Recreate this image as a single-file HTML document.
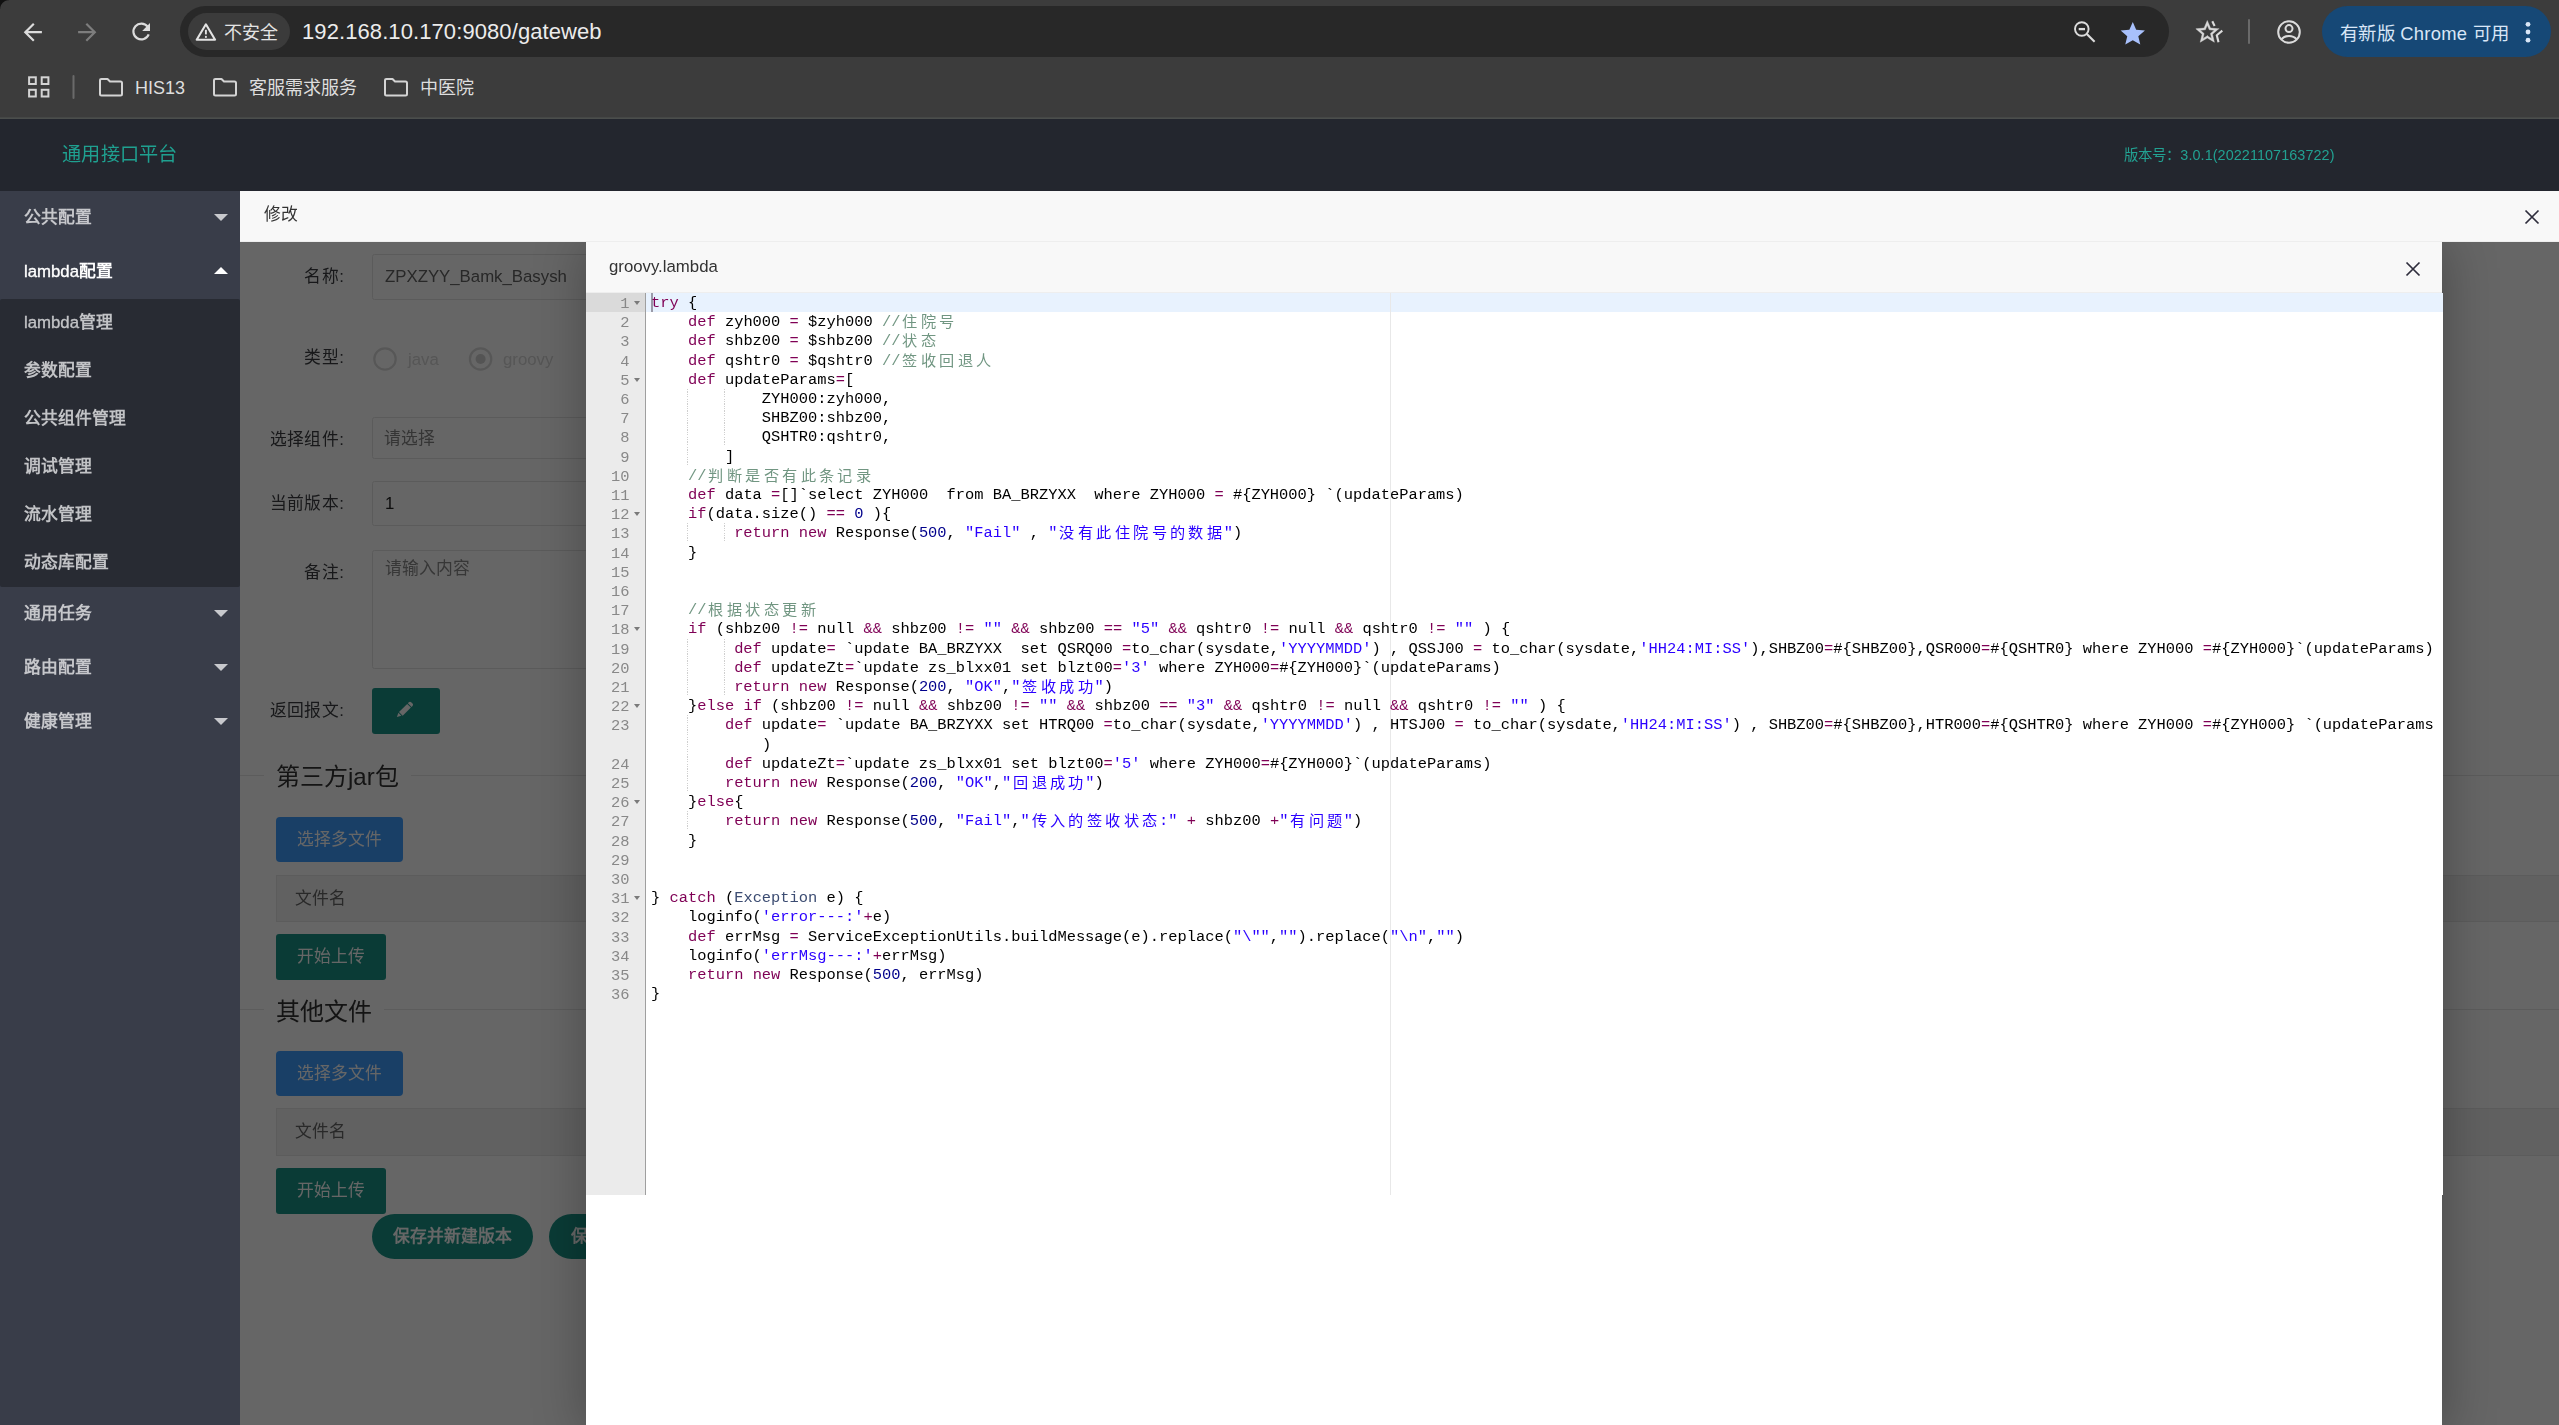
<!DOCTYPE html>
<html lang="zh-CN">
<head>
<meta charset="utf-8">
<title>gateweb</title>
<style>
:root{--cw:9.2367px;--lh:19.2px;--fs:15.4px;}
*{box-sizing:border-box;margin:0;padding:0}
div,span{will-change:transform}
#chrome,#chrome div,#chrome span{will-change:auto}
html,body{width:2559px;height:1425px;overflow:hidden;background:#fff}
body{position:relative;-webkit-font-smoothing:antialiased;font-family:"Liberation Sans",sans-serif;font-size:16.8px;color:#333}
.abs{position:absolute}
s{text-decoration:none}
/* ---------- browser chrome ---------- */
#chrome{position:absolute;left:0;top:0;width:2559px;height:119px;background:#3c3c3c}
#chrome .line{position:absolute;left:0;top:117px;width:2559px;height:2px;background:linear-gradient(#454746 0,#454746 50%,#4b4e4c 50%,#4b4e4c 100%)}
#pill{position:absolute;left:180px;top:6px;width:1989px;height:51px;border-radius:26px;background:#282828}
#chip{position:absolute;left:188px;top:13px;width:102px;height:37px;border-radius:19px;background:#3b3b3b}
#chip span{position:absolute;left:35.500px;top:.8px;line-height:38px;font-size:18px;color:#e3e3e3;white-space:nowrap}
#url{position:absolute;left:302px;top:6px;line-height:51px;font-size:22px;color:#ececec;white-space:nowrap;letter-spacing:.09px}
.bm{position:absolute;top:75.300px;line-height:26px;font-size:18px;color:#dedede;white-space:nowrap}
#upd{position:absolute;left:2322px;top:6px;width:229px;height:51px;border-radius:26px;background:#164876}
#upd span{position:absolute;left:18px;top:1.5px;line-height:51px;font-size:18.4px;color:#d9e6f7;white-space:nowrap;letter-spacing:.28px}
/* ---------- app header ---------- */
#hdr{position:absolute;left:0;top:119px;width:2559px;height:72px;background:#23262e;z-index:2}
#hdr .t{position:absolute;left:62.300px;top:-.3px;line-height:72px;font-size:19.2px;color:#1fa090;white-space:nowrap;letter-spacing:.28px}
#hdr .v{position:absolute;left:2124px;top:0;line-height:72px;font-size:14.4px;color:#22a192;white-space:nowrap;letter-spacing:.08px}
/* ---------- sidebar ---------- */
#side{position:absolute;left:0;top:190px;width:240px;height:1235px;background:#393d49}
#side .it{position:absolute;left:0;width:240px;height:54px;line-height:56.400px;padding-left:24px;font-size:16.8px;font-weight:bold;color:#c6c7cb;white-space:nowrap}
#side .sub{position:absolute;left:0;top:109px;width:240px;height:287.500px;background:#282b33;border-radius:2px}
#side .si{position:absolute;left:0;width:240px;height:48px;line-height:50.400px;margin-top:-1px;padding-left:24px;font-size:16.8px;font-weight:bold;color:#c2c3c6;white-space:nowrap}
#side .ar{position:absolute;left:214px;width:0;height:0;border-left:7px solid transparent;border-right:7px solid transparent}
#side .dn{border-top:7px solid #c8c9cd}
#side .up{border-bottom:7px solid #fff}
#side u{text-decoration:none;font-weight:normal;-webkit-text-stroke:.35px currentColor}
/* ---------- outer dialog ---------- */
#main{position:absolute;left:240px;top:190px;width:2319px;height:1235px;background:#fff;overflow:hidden}
.tb{position:absolute;left:0;top:0;height:52px;background:#f8f8f8;border-bottom:1px solid #eee;line-height:50px;font-size:16.8px;color:#333;white-space:nowrap}
.lb{position:absolute;left:0;width:104.3px;text-align:right;font-size:16.8px;color:#3c3e42;line-height:24px;white-space:nowrap;letter-spacing:.4px}
.in{position:absolute;left:132px;width:1400px;border:1px solid #e4e4e4;border-radius:2.400px;background:#fff;font-size:16.8px;color:#646464;padding-left:12px;white-space:nowrap}
.btn{position:absolute;color:#fff;font-size:16.8px;text-align:center;white-space:nowrap}
.fs{position:absolute;left:0;width:2319px;height:1px;background:#e6e6e6}
.lg{position:absolute;left:25px;background:#fff;padding:0 12px;font-size:24px;line-height:36px;color:#333;white-space:nowrap}
.th{position:absolute;left:36px;width:2400px;height:47px;background:#f2f2f2;border:1px solid #e6e6e6;line-height:45px;padding-left:18px;color:#666;font-size:16.8px}
#shade{position:absolute;left:0;top:52px;width:2319px;height:1183px;background:rgba(0,0,0,.6)}
/* ---------- inner dialog ---------- */
#clip{position:absolute;left:240px;top:242px;width:2319px;height:1183px;overflow:hidden}
#dlg{position:absolute;left:346px;top:0;width:1856px;height:1190px;background:#fff;box-shadow:1px 1px 50px rgba(0,0,0,.3)}
#ed{position:absolute;left:0;top:50.5px;width:1857px;height:902.4px;background:#fff;overflow:hidden;font-family:"Liberation Mono",monospace;font-size:var(--fs);line-height:var(--lh)}
#ed .gut{position:absolute;left:0;top:0;width:60px;height:100%;background:#ebebeb;border-right:1px solid #9f9f9f}
#ed .g{position:absolute;left:0;width:59px;height:var(--lh);line-height:calc(var(--lh) + 2.8px);text-align:right;padding-right:15.6px;color:#888;white-space:nowrap}
#ed .ga{background:#dadada}
#ed .g b{position:absolute;left:47.5px;top:8px;width:0;height:0;border-left:3.6px solid transparent;border-right:3.6px solid transparent;border-top:4.6px solid #7a7a7a}
#ed .al{position:absolute;left:60px;top:0;width:1800px;height:var(--lh);background:#e8f2fe}
#ed .pm{position:absolute;left:803.7px;top:0;width:1px;height:100%;background:#e8e8e8}
#ed .cur{position:absolute;left:64.8px;top:0;width:2px;height:var(--lh);background:#9a9aa8}
#ed .txt{position:absolute;left:64.8px;top:0;width:1800px;height:100%;color:#000;will-change:transform}
#ed .l{position:absolute;left:0;height:var(--lh);line-height:calc(var(--lh) + 2.6px);white-space:pre}
#ed .l i{display:inline-block;width:calc(var(--cw)*2);text-align:center;font-style:normal;font-size:15.200px;line-height:1;vertical-align:baseline;position:relative;top:1px}
#ed .ig{position:absolute;width:1px;background:repeating-linear-gradient(to bottom,#cfcfcf 0,#cfcfcf 1.2px,transparent 1.2px,transparent 2.4px)}
.k{color:#7f0055}.s{color:#2a00ff}.c{color:#719682}.n{color:#00008b}.f{color:#3c4c72}
</style>
</head>
<body>
<!-- browser chrome -->
<div id="chrome">
  <div class="abs" style="left:0;top:0;width:9px;height:9px;background:radial-gradient(circle at 100% 100%,transparent 8.300px,#111 9.300px)"></div>
  <div id="pill"></div>
  <div id="chip"><span>不安全</span></div>
  <div id="url">192.168.10.170:9080/gateweb</div>
  <svg class="abs" style="left:0;top:0" width="2559" height="118" viewBox="0 0 2559 118" fill="none" stroke-linecap="round" stroke-linejoin="round">
    <!-- back -->
    <path d="M41.900 32.200H25.600M33.800 23.700l-8.500 8.500 8.500 8.500" stroke="#dcdcdc" stroke-width="2.2" stroke-linecap="butt" stroke-linejoin="miter"/>
    <!-- forward -->
    <path d="M78.100 32.200h16.300M86.300 23.700l8.500 8.500-8.500 8.500" stroke="#7d7d7d" stroke-width="2.2" stroke-linecap="butt" stroke-linejoin="miter"/>
    <!-- reload -->
    <path d="M147.600 26.700A7.900 7.900 0 1 0 148.700 34.300" stroke="#dcdcdc" stroke-width="2.200" stroke-linecap="butt"/>
    <path d="M150 23.100v7.800h-7.800z" fill="#dcdcdc" stroke="none"/>
    <!-- warning -->
    <path d="M205.900 24.300l9.200 15.400h-18.400z" stroke="#e3e3e3" stroke-width="2.100" stroke-linejoin="round"/>
    <path d="M205.900 29.800v4.600" stroke="#e3e3e3" stroke-width="1.900" stroke-linecap="butt"/>
    <circle cx="205.900" cy="36.900" r="1.050" fill="#e3e3e3" stroke="none"/>
    <!-- zoom out -->
    <circle cx="2081.800" cy="29" r="6.800" stroke="#dcdcdc" stroke-width="1.900"/>
    <path d="M2086.800 34l7.800 7.800" stroke="#dcdcdc" stroke-width="2.100" stroke-linecap="butt"/>
    <path d="M2078.700 29.100h6.300" stroke="#dcdcdc" stroke-width="2.300" stroke-linecap="butt"/>
    <!-- star filled -->
    <path transform="translate(2118.200 19.600) scale(1.215 1.190)" d="M12 17.27L18.18 21l-1.64-7.03L22 9.24l-7.19-.61L12 2 9.19 8.63 2 9.24l5.46 4.73L5.82 21z" fill="#a8c0fb" stroke="none"/>
    <!-- star with second star -->
    <path transform="translate(2193.560 18.200) scale(1.145)" d="M22 9.24l-7.19-.62L12 2 9.19 8.63 2 9.24l5.46 4.73L5.82 21 12 17.270 18.18 21l-1.63-7.03L22 9.24zM12 15.400l-3.76 2.27 1-4.28-3.32-2.88 4.38-.38L12 6.100l1.71 4.04 4.38.38-3.32 2.88 1 4.28L12 15.400z" fill="#d8d8d8" fill-rule="evenodd" stroke="#d8d8d8" stroke-width=".35" stroke-linejoin="miter"/>
    <path d="M2212.300 21.300l2.300 4.700" stroke="#dcdcdc" stroke-width="2.100" stroke-linecap="butt" fill="none"/>
    <path d="M2222.300 30.600l-5.500 4.700 1.700 7" stroke="#dcdcdc" stroke-width="2.100" stroke-linecap="butt" stroke-linejoin="miter" fill="none"/>
    <!-- divider -->
    <path d="M2249 20v23" stroke="#6a6a6a" stroke-width="2" />
    <!-- profile -->
    <circle cx="2289" cy="32" r="10.800" stroke="#dcdcdc" stroke-width="2"/>
    <circle cx="2289" cy="28.600" r="3.500" stroke="#dcdcdc" stroke-width="2"/>
    <path d="M2281.300 39.300c2-2.300 4.700-3.300 7.700-3.300s5.700 1 7.700 3.300" stroke="#dcdcdc" stroke-width="2" stroke-linecap="butt"/>
    <!-- apps grid -->
    <g stroke="#d4d4d4" stroke-width="2" stroke-linejoin="miter">
      <rect x="29.100" y="77.300" width="6.700" height="6.700"/><rect x="41.700" y="77.300" width="6.700" height="6.700"/>
      <rect x="29.100" y="89.800" width="6.700" height="6.700"/><rect x="41.700" y="89.800" width="6.700" height="6.700"/>
    </g>
    <path d="M73.500 76v22" stroke="#6a6a6a" stroke-width="2"/>
    <!-- folders -->
    <g stroke="#d4d4d4" stroke-width="2" stroke-linejoin="round">
      <path d="M100 80.500a1.500 1.500 0 0 1 1.500-1.500h6l2.500 2.500h10.500a1.500 1.500 0 0 1 1.500 1.500v11a1.500 1.500 0 0 1-1.500 1.500h-19a1.500 1.500 0 0 1-1.500-1.500z"/>
      <path transform="translate(114 0)" d="M100 80.500a1.500 1.500 0 0 1 1.500-1.500h6l2.500 2.500h10.500a1.500 1.500 0 0 1 1.500 1.500v11a1.500 1.500 0 0 1-1.500 1.500h-19a1.500 1.500 0 0 1-1.500-1.500z"/>
      <path transform="translate(285 0)" d="M100 80.500a1.500 1.500 0 0 1 1.500-1.500h6l2.500 2.500h10.500a1.500 1.500 0 0 1 1.500 1.500v11a1.500 1.500 0 0 1-1.500 1.500h-19a1.500 1.500 0 0 1-1.500-1.500z"/>
    </g>
  </svg>
  <div class="bm" style="left:135px">HIS13</div>
  <div class="bm" style="left:249px">客服需求服务</div>
  <div class="bm" style="left:420px">中医院</div>
  <div id="upd"><span>有新版 Chrome 可用</span></div>
  <svg class="abs" style="left:2520px;top:18px" width="16" height="30" viewBox="0 0 16 30"><circle cx="8" cy="6.300" r="2.400" fill="#d9e6f7"/><circle cx="8" cy="14" r="2.400" fill="#d9e6f7"/><circle cx="8" cy="22.200" r="2.400" fill="#d9e6f7"/></svg>
  <div class="line"></div>
</div>

<!-- app header -->
<div id="hdr"><div class="t">通用接口平台</div><div class="v">版本号：3.0.1(20221107163722)</div></div>

<!-- sidebar -->
<div id="side">
  <div class="it" style="top:0">公共配置</div><div class="ar dn" style="top:24px"></div>
  <div class="it" style="top:54px;color:#fff"><u>lambda</u>配置</div><div class="ar up" style="top:77px"></div>
  <div class="sub">
    <div class="si" style="top:0"><u>lambda</u>管理</div>
    <div class="si" style="top:48px">参数配置</div>
    <div class="si" style="top:96px">公共组件管理</div>
    <div class="si" style="top:144px">调试管理</div>
    <div class="si" style="top:192px">流水管理</div>
    <div class="si" style="top:240px">动态库配置</div>
  </div>
  <div class="it" style="top:396px">通用任务</div><div class="ar dn" style="top:420px"></div>
  <div class="it" style="top:450px">路由配置</div><div class="ar dn" style="top:474px"></div>
  <div class="it" style="top:504px">健康管理</div><div class="ar dn" style="top:528px"></div>
</div>

<!-- outer dialog (修改) -->
<div id="main">
  <div class="tb" style="width:2319px;padding-left:24px">修改</div>
  <svg class="abs" style="left:2284.300px;top:18.700px" width="16" height="16" viewBox="0 0 16 16"><path d="M1.500 1.500l13 13M14.500 1.500l-13 13" stroke="#2e2d3c" stroke-width="1.700"/></svg>

  <!-- form -->
  <div class="lb" style="top:75px">名称:</div>
  <div class="in" style="top:64px;height:46px;line-height:44px">ZPXZYY_Bamk_Basysh</div>
  <div class="lb" style="top:156px">类型:</div>
  <svg class="abs" style="left:130px;top:154px" width="330" height="30" viewBox="0 0 330 30" fill="none">
    <circle cx="15" cy="15" r="10.700" stroke="#dadada" stroke-width="2.200" fill="none"/>
    <circle cx="110.600" cy="15" r="10.700" stroke="#dadada" stroke-width="2.200" fill="none"/>
    <circle cx="110.600" cy="15" r="5" fill="#d2d2d2"/>
  </svg>
  <div class="abs" style="left:167.500px;top:158px;line-height:24px;font-size:16.8px;color:#d6d6d6">java</div>
  <div class="abs" style="left:263px;top:158px;line-height:24px;font-size:16.8px;color:#d6d6d6">groovy</div>
  <div class="lb" style="top:238px">选择组件:</div>
  <div class="in" style="top:227px;height:42px;line-height:41px;color:#848484;padding-left:10.500px;letter-spacing:.35px">请选择</div>
  <div class="lb" style="top:302px">当前版本:</div>
  <div class="in" style="top:291px;height:45px;line-height:43px;color:#222">1</div>
  <div class="lb" style="top:371px">备注:</div>
  <div class="in" style="top:360px;height:119px;line-height:36px;color:#8a8a8a;padding-left:12px">请输入内容</div>
  <div class="lb" style="top:509px">返回报文:</div>
  <div class="btn" style="left:132px;top:498px;width:68px;height:46px;background:#1a9588;border-radius:3px">
    <svg class="abs" style="left:22px;top:11px" width="24" height="24" viewBox="0 0 24 24"><path d="M2.900 18.100l1.500-4.300 2.900 2.900z" fill="#fff"/><path d="M5 13.100l8.200-8.200 3.700 3.700-8.200 8.200z" fill="#fff"/><path d="M13.900 4.200l.9-.9c.7-.7 1.700-.7 2.400 0l1.300 1.300c.7.7 .7 1.700 0 2.400l-.9 .9z" fill="#fff"/></svg>
  </div>

  <div class="fs" style="top:585px"></div><div class="lg" style="top:569px;left:24px">第三方jar包</div>
  <div class="btn" style="left:36px;top:627px;width:127px;height:45px;line-height:45px;background:#409eff;border-radius:4px">选择多文件</div>
  <div class="th" style="top:685px">文件名</div>
  <div class="btn" style="left:36px;top:744px;width:110px;height:46px;line-height:46px;background:#1a9588;border-radius:3px">开始上传</div>

  <div class="fs" style="top:819px"></div><div class="lg" style="top:804px;left:24px">其他文件</div>
  <div class="btn" style="left:36px;top:861px;width:127px;height:45px;line-height:45px;background:#409eff;border-radius:4px">选择多文件</div>
  <div class="th" style="top:918px;height:48px">文件名</div>
  <div class="btn" style="left:36px;top:978px;width:110px;height:46px;line-height:46px;background:#1a9588;border-radius:3px">开始上传</div>

  <div class="btn" style="left:132px;top:1024px;width:161px;height:45px;line-height:45px;background:#1a9588;border-radius:23px;font-weight:bold">保存并新建版本</div>
  <div class="btn" style="left:309px;top:1024px;width:100px;height:45px;line-height:45px;background:#1a9588;border-radius:23px;font-weight:bold;text-align:left;padding-left:22px">保存</div>

  <div id="shade"></div>
</div>

<!-- inner dialog (groovy.lambda) -->
<div id="clip"><div id="dlg">
  <div class="tb" style="width:1856px;height:50.5px;padding-left:23px;line-height:49px">groovy.lambda</div>
  <svg class="abs" style="left:1819.200px;top:18.600px" width="16" height="16" viewBox="0 0 16 16"><path d="M1.500 1.500l13 13M14.500 1.500l-13 13" stroke="#2e2d3c" stroke-width="1.700"/></svg>
  <div id="ed">
    <div class="gut"></div>
    <div class="al"></div>
    <div class="pm"></div>
    <div class="cur"></div>
<div class="g ga" style="top:0.00px">1<b></b></div>
<div class="g" style="top:19.20px">2</div>
<div class="g" style="top:38.40px">3</div>
<div class="g" style="top:57.60px">4</div>
<div class="g" style="top:76.80px">5<b></b></div>
<div class="g" style="top:96.00px">6</div>
<div class="g" style="top:115.20px">7</div>
<div class="g" style="top:134.40px">8</div>
<div class="g" style="top:153.60px">9</div>
<div class="g" style="top:172.80px">10</div>
<div class="g" style="top:192.00px">11</div>
<div class="g" style="top:211.20px">12<b></b></div>
<div class="g" style="top:230.40px">13</div>
<div class="g" style="top:249.60px">14</div>
<div class="g" style="top:268.80px">15</div>
<div class="g" style="top:288.00px">16</div>
<div class="g" style="top:307.20px">17</div>
<div class="g" style="top:326.40px">18<b></b></div>
<div class="g" style="top:345.60px">19</div>
<div class="g" style="top:364.80px">20</div>
<div class="g" style="top:384.00px">21</div>
<div class="g" style="top:403.20px">22<b></b></div>
<div class="g" style="top:422.40px">23</div>
<div class="g" style="top:460.80px">24</div>
<div class="g" style="top:480.00px">25</div>
<div class="g" style="top:499.20px">26<b></b></div>
<div class="g" style="top:518.40px">27</div>
<div class="g" style="top:537.60px">28</div>
<div class="g" style="top:556.80px">29</div>
<div class="g" style="top:576.00px">30</div>
<div class="g" style="top:595.20px">31<b></b></div>
<div class="g" style="top:614.40px">32</div>
<div class="g" style="top:633.60px">33</div>
<div class="g" style="top:652.80px">34</div>
<div class="g" style="top:672.00px">35</div>
<div class="g" style="top:691.20px">36</div>
<div class=txt>
<div class=ig style="top:96.00px;left:35.95px;height:19.20px"></div>
<div class=ig style="top:96.00px;left:72.89px;height:19.20px"></div>
<div class=ig style="top:115.20px;left:35.95px;height:19.20px"></div>
<div class=ig style="top:115.20px;left:72.89px;height:19.20px"></div>
<div class=ig style="top:134.40px;left:35.95px;height:19.20px"></div>
<div class=ig style="top:134.40px;left:72.89px;height:19.20px"></div>
<div class=ig style="top:153.60px;left:35.95px;height:19.20px"></div>
<div class=ig style="top:230.40px;left:35.95px;height:19.20px"></div>
<div class=ig style="top:230.40px;left:72.89px;height:19.20px"></div>
<div class=ig style="top:345.60px;left:35.95px;height:19.20px"></div>
<div class=ig style="top:345.60px;left:72.89px;height:19.20px"></div>
<div class=ig style="top:364.80px;left:35.95px;height:19.20px"></div>
<div class=ig style="top:364.80px;left:72.89px;height:19.20px"></div>
<div class=ig style="top:384.00px;left:35.95px;height:19.20px"></div>
<div class=ig style="top:384.00px;left:72.89px;height:19.20px"></div>
<div class=ig style="top:422.40px;left:35.95px;height:38.40px"></div>
<div class=ig style="top:460.80px;left:35.95px;height:19.20px"></div>
<div class=ig style="top:480.00px;left:35.95px;height:19.20px"></div>
<div class=ig style="top:518.40px;left:35.95px;height:19.20px"></div>
<div class=l style="top:0.00px"><s class=k>try</s> {</div>
<div class=l style="top:19.20px">    <s class=k>def</s> zyh000 <s class=k>=</s> $zyh000 <s class=c>//<i>住</i><i>院</i><i>号</i></s></div>
<div class=l style="top:38.40px">    <s class=k>def</s> shbz00 <s class=k>=</s> $shbz00 <s class=c>//<i>状</i><i>态</i></s></div>
<div class=l style="top:57.60px">    <s class=k>def</s> qshtr0 <s class=k>=</s> $qshtr0 <s class=c>//<i>签</i><i>收</i><i>回</i><i>退</i><i>人</i></s></div>
<div class=l style="top:76.80px">    <s class=k>def</s> updateParams<s class=k>=</s>[</div>
<div class=l style="top:96.00px">            ZYH000:zyh000,</div>
<div class=l style="top:115.20px">            SHBZ00:shbz00,</div>
<div class=l style="top:134.40px">            QSHTR0:qshtr0,</div>
<div class=l style="top:153.60px">        ]</div>
<div class=l style="top:172.80px">    <s class=c>//<i>判</i><i>断</i><i>是</i><i>否</i><i>有</i><i>此</i><i>条</i><i>记</i><i>录</i></s></div>
<div class=l style="top:192.00px">    <s class=k>def</s> data <s class=k>=</s>[]`select ZYH000  from BA_BRZYXX  where ZYH000 <s class=k>=</s> #{ZYH000} `(updateParams)</div>
<div class=l style="top:211.20px">    <s class=k>if</s>(data.size() <s class=k>==</s> <s class=n>0</s> ){</div>
<div class=l style="top:230.40px">         <s class=k>return</s> <s class=k>new</s> Response(<s class=n>500</s>, <s class=s>"Fail"</s> , <s class=s>"<i>没</i><i>有</i><i>此</i><i>住</i><i>院</i><i>号</i><i>的</i><i>数</i><i>据</i>"</s>)</div>
<div class=l style="top:249.60px">    }</div>
<div class=l style="top:268.80px"></div>
<div class=l style="top:288.00px"></div>
<div class=l style="top:307.20px">    <s class=c>//<i>根</i><i>据</i><i>状</i><i>态</i><i>更</i><i>新</i></s></div>
<div class=l style="top:326.40px">    <s class=k>if</s> (shbz00 <s class=k>!=</s> null <s class=k>&amp;&amp;</s> shbz00 <s class=k>!=</s> <s class=s>""</s> <s class=k>&amp;&amp;</s> shbz00 <s class=k>==</s> <s class=s>"5"</s> <s class=k>&amp;&amp;</s> qshtr0 <s class=k>!=</s> null <s class=k>&amp;&amp;</s> qshtr0 <s class=k>!=</s> <s class=s>""</s> ) {</div>
<div class=l style="top:345.60px">         <s class=k>def</s> update<s class=k>=</s> `update BA_BRZYXX  set QSRQ00 <s class=k>=</s>to_char(sysdate,<s class=s>'YYYYMMDD'</s>) , QSSJ00 <s class=k>=</s> to_char(sysdate,<s class=s>'HH24:MI:SS'</s>),SHBZ00<s class=k>=</s>#{SHBZ00},QSR000<s class=k>=</s>#{QSHTR0} where ZYH000 <s class=k>=</s>#{ZYH000}`(updateParams)</div>
<div class=l style="top:364.80px">         <s class=k>def</s> updateZt<s class=k>=</s>`update zs_blxx01 set blzt00<s class=k>=</s><s class=s>'3'</s> where ZYH000<s class=k>=</s>#{ZYH000}`(updateParams)</div>
<div class=l style="top:384.00px">         <s class=k>return</s> <s class=k>new</s> Response(<s class=n>200</s>, <s class=s>"OK"</s>,<s class=s>"<i>签</i><i>收</i><i>成</i><i>功</i>"</s>)</div>
<div class=l style="top:403.20px">    }<s class=k>else</s> <s class=k>if</s> (shbz00 <s class=k>!=</s> null <s class=k>&amp;&amp;</s> shbz00 <s class=k>!=</s> <s class=s>""</s> <s class=k>&amp;&amp;</s> shbz00 <s class=k>==</s> <s class=s>"3"</s> <s class=k>&amp;&amp;</s> qshtr0 <s class=k>!=</s> null <s class=k>&amp;&amp;</s> qshtr0 <s class=k>!=</s> <s class=s>""</s> ) {</div>
<div class=l style="top:422.40px">        <s class=k>def</s> update<s class=k>=</s> `update BA_BRZYXX set HTRQ00 <s class=k>=</s>to_char(sysdate,<s class=s>'YYYYMMDD'</s>) , HTSJ00 <s class=k>=</s> to_char(sysdate,<s class=s>'HH24:MI:SS'</s>) , SHBZ00<s class=k>=</s>#{SHBZ00},HTR000<s class=k>=</s>#{QSHTR0} where ZYH000 <s class=k>=</s>#{ZYH000} `(updateParams</div>
<div class=l style="top:441.60px;left:110.84px">)</div>
<div class=l style="top:460.80px">        <s class=k>def</s> updateZt<s class=k>=</s>`update zs_blxx01 set blzt00<s class=k>=</s><s class=s>'5'</s> where ZYH000<s class=k>=</s>#{ZYH000}`(updateParams)</div>
<div class=l style="top:480.00px">        <s class=k>return</s> <s class=k>new</s> Response(<s class=n>200</s>, <s class=s>"OK"</s>,<s class=s>"<i>回</i><i>退</i><i>成</i><i>功</i>"</s>)</div>
<div class=l style="top:499.20px">    }<s class=k>else</s>{</div>
<div class=l style="top:518.40px">        <s class=k>return</s> <s class=k>new</s> Response(<s class=n>500</s>, <s class=s>"Fail"</s>,<s class=s>"<i>传</i><i>入</i><i>的</i><i>签</i><i>收</i><i>状</i><i>态</i>:"</s> <s class=k>+</s> shbz00 <s class=k>+</s><s class=s>"<i>有</i><i>问</i><i>题</i>"</s>)</div>
<div class=l style="top:537.60px">    }</div>
<div class=l style="top:556.80px"></div>
<div class=l style="top:576.00px"></div>
<div class=l style="top:595.20px">} <s class=k>catch</s> (<s class=f>Exception</s> e) {</div>
<div class=l style="top:614.40px">    loginfo(<s class=s>'error---:'</s><s class=k>+</s>e)</div>
<div class=l style="top:633.60px">    <s class=k>def</s> errMsg <s class=k>=</s> ServiceExceptionUtils.buildMessage(e).replace(<s class=s>"\""</s>,<s class=s>""</s>).replace(<s class=s>"\n"</s>,<s class=s>""</s>)</div>
<div class=l style="top:652.80px">    loginfo(<s class=s>'errMsg---:'</s><s class=k>+</s>errMsg)</div>
<div class=l style="top:672.00px">    <s class=k>return</s> <s class=k>new</s> Response(<s class=n>500</s>, errMsg)</div>
<div class=l style="top:691.20px">}</div>
</div>
  </div>
</div></div>
</body>
</html>
